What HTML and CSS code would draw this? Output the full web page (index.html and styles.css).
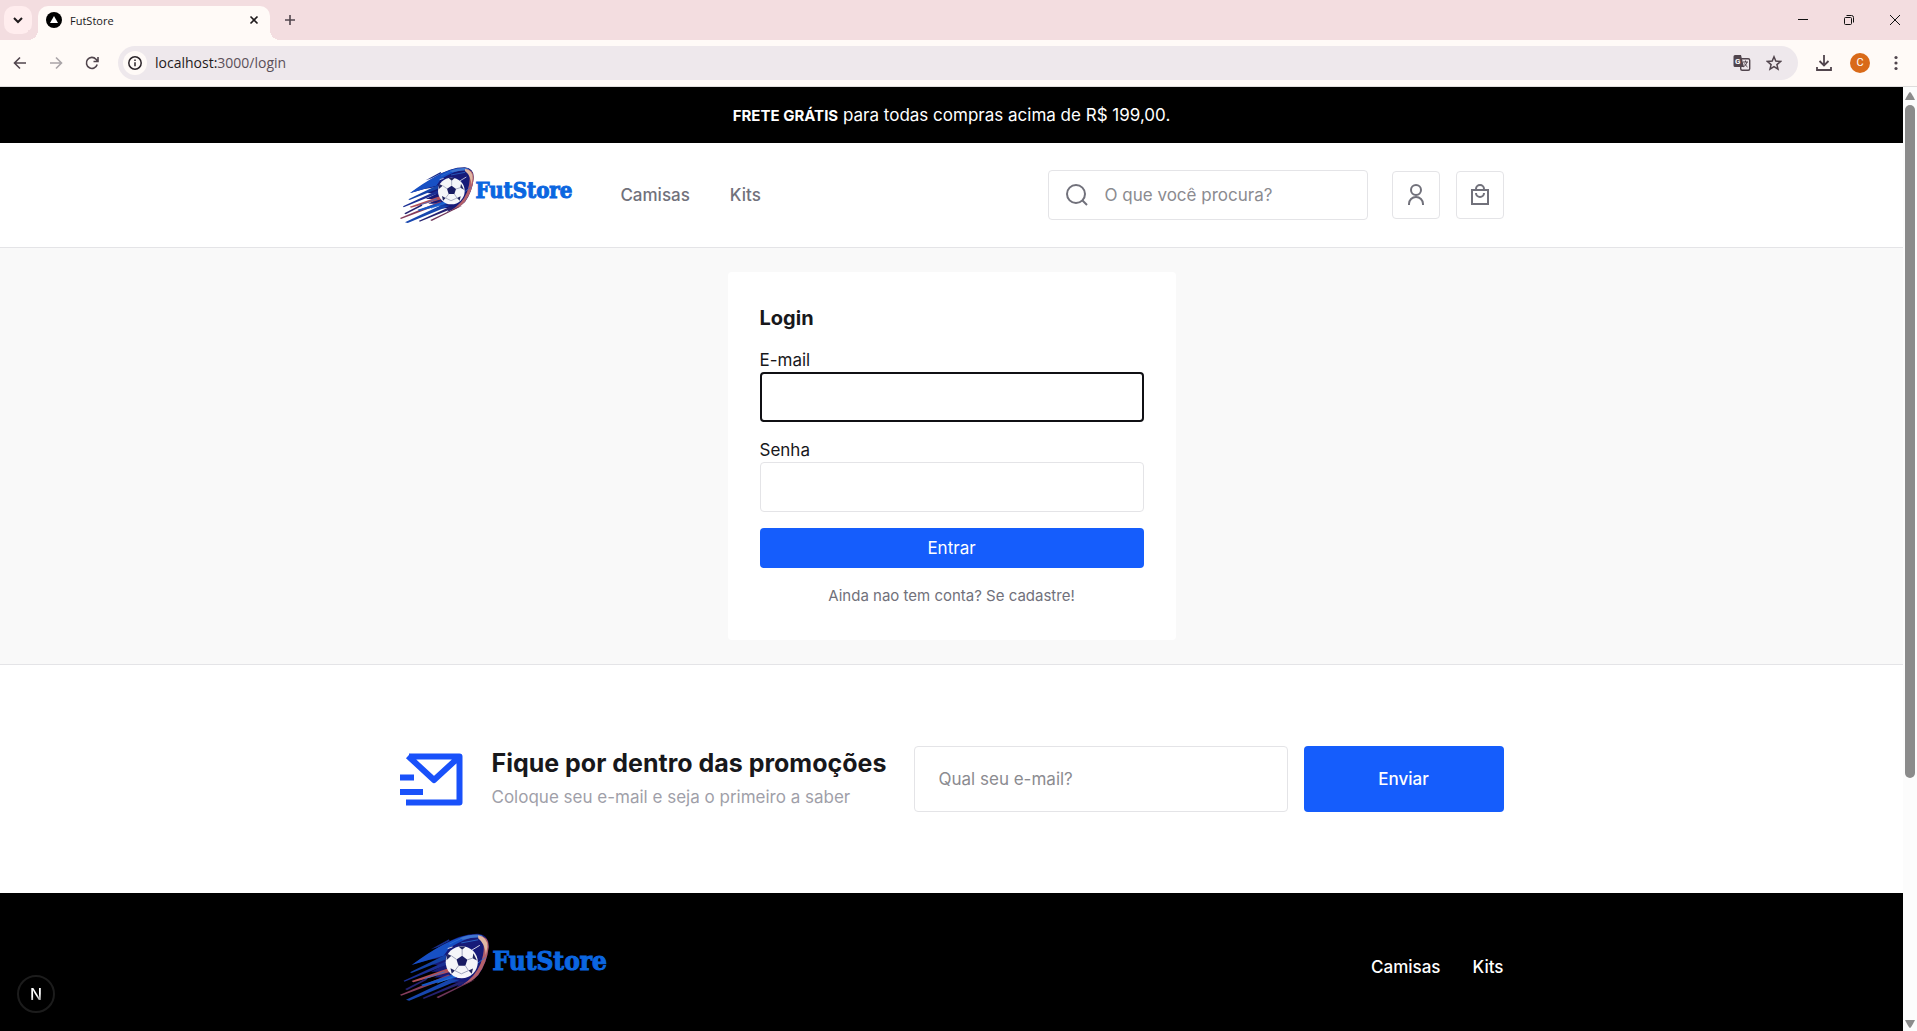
FILE: index.html
```html
<!DOCTYPE html>
<html lang="pt-BR">
<head>
<meta charset="utf-8">
<title>FutStore</title>
<link rel="stylesheet" href="styles.css">
</head>
<body>
<svg class="sprite" aria-hidden="true">
  <symbol id="comet" viewBox="27 50 222 168">
    <path d="M104 90 149 65 151 69 122 84Z" fill="#172c8c"/>
    <path d="M58 128 132 80Q180 50 222 51 250 54 248 84 244 125 222 155 200 176 168 184L178 172 140 176 152 160 112 160 138 146 104 146 136 130 108 128 138 110 100 116Z" fill="#161a78"/>
    <path d="M56 129Q140 66 198 54L228 54Q190 62 150 86L136 106 96 117Z" fill="#1750c4"/>
    <path d="M176 62Q206 50 230 54L240 64Q222 56 184 66Z" fill="#3f74cf"/>
    <path d="M224 56Q250 58 248 86 244 124 222 154 204 174 180 180 214 160 228 126 240 92 234 72Z" fill="#b4606a"/>
    <path d="M222 55Q246 60 245 84L241 104Q240 76 222 62Z" fill="#e0b7a4"/>
    <path d="M52 147 142 103 141 115 56 149Z" fill="#1443a8"/>
    <path d="M36 168 140 120 142 129 38 171Z" fill="#1b2f94"/>
    <path d="M56 169 146 138 154 146 60 172Z" fill="#b2505a"/>
    <path d="M27 203 148 153 156 159 30 206Z" fill="#873d5c"/>
    <path d="M40 189 92 162 94 166 44 192Z" fill="#252170"/>
    <path d="M80 178 164 151 168 161 84 182Z" fill="#1557c8"/>
    <path d="M42 216 152 164 176 166 50 218Z" fill="#1746ae"/>
    <path d="M84 211 176 170 190 172 86 214Z" fill="#252170"/>
    <path d="M118 209 200 170 214 166 122 212Z" fill="#6e3559"/>
    <path d="M120 174 176 152M90 163 138 146M150 77 182 62M208 134 240 110M180 74 222 66" stroke="#2e73d6" stroke-width="2" fill="none"/>
    <circle cx="181" cy="122" r="40" fill="#f5f6f9"/>
    <path d="M168 115 182 106 195 116 190 131 173 131Z" fill="#191c62"/>
    <path d="M173 83 182 91 191 83Z" fill="#22265f"/>
    <path d="M210 100 208 112 219 118Z" fill="#22265f"/>
    <path d="M206 151 198 143 209 138Z" fill="#22265f"/>
    <path d="M156 151 164 143 153 137Z" fill="#22265f"/>
    <path d="M145 101 155 106 143 117Z" fill="#22265f"/>
    <path d="M182 106V91M195 116 208 112M190 131 198 143M173 131 164 143M168 115 155 106M164 143 180 151 198 143" stroke="#8b91ae" stroke-width="2" fill="none"/>
    <path d="M206 92 226 80M146 88 158 84M170 160 192 156" stroke="#fff" stroke-width="2"/>
  </symbol>
</svg>

<div class="browser">
  <div class="tabstrip">
    <button class="tab-search" aria-label="Pesquisar guias"><svg width="16" height="16" viewBox="0 0 16 16" fill="none" stroke="#1f1a1c" stroke-width="2"><path d="m4 6 4 4 4-4"/></svg></button>
    <div class="tab">
      <svg width="16" height="16" viewBox="0 0 16 16"><circle cx="8" cy="8" r="8"/><path d="m8 4 4 7H4Z" fill="#fff"/></svg>
      <span class="tab__title">FutStore</span>
      <button class="icon-button" aria-label="Fechar guia"><svg width="16" height="16" viewBox="0 0 16 16" stroke="#1f1a1c" stroke-width="1.600"><path d="m4.500 4.500 7 7M11.500 4.500l-7 7"/></svg></button>
    </div>
    <button class="icon-button tab-new" aria-label="Nova guia"><svg width="16" height="16" viewBox="0 0 16 16" stroke="#51454d" stroke-width="1.600"><path d="M8 3v10M3 8h10"/></svg></button>
    <div class="window-controls">
      <button class="icon-button" aria-label="Minimizar"><svg width="12" height="12" viewBox="0 0 12 12" stroke="#111"><path d="M1 5.500h10"/></svg></button>
      <button class="icon-button" aria-label="Restaurar"><svg width="12" height="12" viewBox="0 0 12 12" stroke="#111" fill="none"><rect x="1.500" y="3.500" width="7" height="7" rx="1"/><path d="M3.500 1.500h5a2 2 0 0 1 2 2v5"/></svg></button>
      <button class="icon-button" aria-label="Fechar"><svg width="12" height="12" viewBox="0 0 12 12" stroke="#111"><path d="m1 1 10 10M11 1 1 11"/></svg></button>
    </div>
  </div>

  <div class="toolbar">
    <button class="icon-button" aria-label="Voltar"><svg width="16" height="16" viewBox="0 0 16 16" fill="none" stroke="#51454d" stroke-width="1.600"><path d="M14 8H3M8 2.500 2.500 8 8 13.500"/></svg></button>
    <button class="icon-button" aria-label="Avançar"><svg width="16" height="16" viewBox="0 0 16 16" fill="none" stroke="#aaa4a8" stroke-width="1.600"><path d="M2 8h11M8 2.500 13.500 8 8 13.500"/></svg></button>
    <button class="icon-button" aria-label="Recarregar"><svg width="16" height="16" viewBox="0 0 16 16" fill="none" stroke="#51454d" stroke-width="1.600"><path d="M13.200 9.500A5.500 5.500 0 1 1 12 4.200L13.500 6M14 2v4.500H9.500"/></svg></button>
    <div class="omnibox">
      <button class="site-info" aria-label="Informações do site"><svg width="16" height="16" viewBox="0 0 16 16" fill="none" stroke="#2b2429" stroke-width="1.500"><circle cx="8" cy="8" r="6.200"/><path d="M8 7.200v4M8 4.500V6"/></svg></button>
      <span class="url">localhost:<span class="url__path">3000/login</span></span>
      <button class="icon-button" aria-label="Traduzir"><svg width="18" height="18" viewBox="0 0 18 18"><rect x="7.700" y="4.700" width="9" height="11.600" rx="1.500" fill="none" stroke="#51454d" stroke-width="1.400"/><path d="M2 1h6l3 12H2a1.500 1.500 0 0 1-1.500-1.500v-9A1.500 1.500 0 0 1 2 1Z" fill="#51454d"/><text x="2" y="10" class="glyph-g">G</text><path d="M10 8h5M12.500 6.500V8M14 8q-1 4-4 5M11.500 9.500q1 2 3 3.500" stroke="#51454d" fill="none"/></svg></button>
      <button class="icon-button" aria-label="Favoritar"><svg width="16" height="16" viewBox="0 0 16 16" fill="none" stroke="#51454d" stroke-width="1.500"><path d="m8 1.800 1.800 4.300 4.700.4-3.600 3.100 1.100 4.600L8 11.700l-4 2.500 1.100-4.600L1.500 6.500l4.700-.4Z"/></svg></button>
    </div>
    <button class="icon-button" aria-label="Downloads"><svg width="18" height="18" viewBox="0 0 18 18" fill="none" stroke="#51454d" stroke-width="1.800"><path d="M9 1v10M4.500 7 9 11.500 13.500 7M2 13v3h14v-3"/></svg></button>
    <button class="avatar" aria-label="Perfil">C</button>
    <button class="icon-button" aria-label="Menu"><svg width="16" height="16" viewBox="0 0 16 16" fill="#51454d"><circle cx="8" cy="2.500" r="1.600"/><circle cx="8" cy="8" r="1.600"/><circle cx="8" cy="13.500" r="1.600"/></svg></button>
  </div>

  <div class="viewport">
    <div class="page">
      <p class="promo"><strong>FRETE GRÁTIS</strong> para todas compras acima de R$ 199,00.</p>

      <header class="header">
        <div class="container header__inner">
          <a class="logo" href="#"><svg class="logo__mark" aria-hidden="true"><use href="#comet"/></svg><span>FutStore</span></a>
          <nav class="nav">
            <a href="#">Camisas</a>
            <a href="#">Kits</a>
          </nav>
          <label class="search">
            <svg width="24" height="24" viewBox="0 0 24 24" fill="none" stroke="#71717b" stroke-width="2"><circle cx="11" cy="11" r="9"/><path d="m17 17 5 5"/></svg>
            <input type="search" placeholder="O que você procura?" aria-label="Buscar">
          </label>
          <div class="actions">
            <a class="action" href="#" aria-label="Minha conta"><svg width="24" height="24" viewBox="0 0 24 24" fill="none" stroke="#71717b" stroke-width="2"><circle cx="12" cy="7" r="5"/><path d="M5 22v-1a7 7 0 0 1 14 0v1"/></svg></a>
            <a class="action" href="#" aria-label="Carrinho"><svg width="24" height="24" viewBox="0 0 24 24" fill="none" stroke="#71717b" stroke-width="2"><path d="M4 7h16v14H4ZM8 7V6a4 4 0 0 1 8 0v1M8 10a4 4 0 0 0 8 0"/></svg></a>
          </div>
        </div>
      </header>

      <main class="main">
        <form class="card">
          <h1 class="card__title">Login</h1>
          <div class="field">
            <label for="email">E-mail</label>
            <input class="input input--active" id="email" type="email">
          </div>
          <div class="field">
            <label for="password">Senha</label>
            <input class="input" id="password" type="password">
          </div>
          <button class="button" type="button">Entrar</button>
          <a class="card__link" href="#">Ainda nao tem conta? Se cadastre!</a>
        </form>
      </main>

      <section class="newsletter">
        <div class="container newsletter__inner">
          <div class="newsletter__intro">
            <svg width="64" height="64" viewBox="0 0 64 64" fill="none" stroke="#1951fa" stroke-width="6"><path d="M9 9.500h50.500v46H6M8 9l26 24L59 10M0 30.500h14M0 45h23" stroke-linejoin="round"/></svg>
            <div>
              <h2 class="newsletter__title">Fique por dentro das promoções</h2>
              <p class="newsletter__text">Coloque seu e-mail e seja o primeiro a saber</p>
            </div>
          </div>
          <form class="newsletter__form">
            <input class="input newsletter__input" type="email" placeholder="Qual seu e-mail?" aria-label="Seu e-mail">
            <button class="button newsletter__button" type="button">Enviar</button>
          </form>
        </div>
      </section>

      <footer class="footer">
        <div class="container footer__inner">
          <a class="logo logo--large" href="#"><svg class="logo__mark" aria-hidden="true"><use href="#comet"/></svg><span>FutStore</span></a>
          <nav class="footer__nav">
            <a href="#">Camisas</a>
            <a href="#">Kits</a>
          </nav>
        </div>
      </footer>
      <button class="dev-badge" aria-label="Ferramentas de desenvolvimento"><span>N</span></button>
    </div>
    <div class="scrollbar" aria-hidden="true">
      <svg width="10" height="8" viewBox="0 0 10 8" fill="#8b8b8b"><path d="M5 0q1 0 5 8H0Q4 0 5 0Z"/></svg>
      <div class="scrollbar__track"><div class="scrollbar__thumb"></div></div>
      <svg width="10" height="8" viewBox="0 0 10 8" fill="#8b8b8b"><path d="M0 0h10Q6 8 5 8T0 0Z"/></svg>
    </div>
  </div>
</div>
</body>
</html>
```
FILE: styles.css
```css
* { box-sizing: border-box; }

body {
  margin: 0;
  font: 17px/24px Inter, sans-serif;
  color: #18181b;
}

h1, h2, p { margin: 0; }
a { color: inherit; text-decoration: none; }
button, input { font: inherit; color: inherit; }
button { padding: 0; border: 0; background: none; }
svg { display: block; flex: none; }
.sprite { position: absolute; width: 0; height: 0; }

/* Browser window */
.browser {
  display: flex;
  flex-direction: column;
  height: 100vh;
  overflow: hidden;
}

.icon-button {
  display: grid;
  place-items: center;
  flex: none;
  width: 20px;
  height: 20px;
}

.tabstrip {
  display: flex;
  flex: none;
  align-items: center;
  height: 40px;
  padding-left: 4px;
  background: #f3dde0;
}

.tab-search {
  display: grid;
  place-items: center;
  width: 28px;
  height: 28px;
  border-radius: 10px;
  background: #ffedee;
}

.tab {
  position: relative;
  display: flex;
  align-items: center;
  align-self: flex-end;
  gap: 8px;
  width: 232px;
  height: 34px;
  margin-left: 6px;
  padding: 0 6px 6px 8px;
  border-radius: 10px 10px 0 0;
  background: #fffaf7;
}

.tab::before,
.tab::after {
  content: "";
  position: absolute;
  bottom: 0;
  width: 10px;
  height: 10px;
}

.tab::before { right: 100%; background: radial-gradient(circle at 0 0, #f3dde0 10px, #fffaf7 10px); }
.tab::after { left: 100%; background: radial-gradient(circle at 100% 0, #f3dde0 10px, #fffaf7 10px); }
.tab__title { flex: 1; padding-top: 1px; font: 11px/16px "Open Sans", sans-serif; }
.tab-new { margin-left: 10px; }
.window-controls { display: flex; gap: 26px; margin-left: auto; padding-right: 12px; }

.toolbar {
  display: flex;
  flex: none;
  align-items: center;
  gap: 16px;
  height: 47px;
  padding: 0 11px 1px 10px;
  border-bottom: 1px solid #dedcdc;
  background: #fffaf7;
}

.omnibox {
  display: flex;
  flex: 1;
  align-items: center;
  gap: 12px;
  height: 34px;
  padding: 0 14px 0 5px;
  border-radius: 17px;
  background: #eee8ec;
}

.site-info {
  display: grid;
  place-items: center;
  width: 24px;
  height: 24px;
  border-radius: 50%;
  background: #fffaf7;
}

.url { flex: 1; margin-left: -4px; font: 14px/20px "Open Sans", sans-serif; color: #1f1a1c; }
.url__path { color: #5b5059; }
.glyph-g { font: bold 8px Roboto, sans-serif; fill: #fff; }

.avatar {
  width: 20px;
  height: 20px;
  border-radius: 50%;
  background: #d96a19;
  color: #fff;
  font: 11px/20px Roboto, sans-serif;
}

.viewport { display: flex; flex: 1; min-height: 0; }

.scrollbar {
  display: flex;
  flex-direction: column;
  align-items: center;
  gap: 5px;
  width: 14px;
  padding: 5px 0 3px;
  background: #fcfcfc;
}

.scrollbar__track { flex: 1; }
.scrollbar__thumb { width: 10px; height: 74%; border-radius: 5px; background: #8b8b8b; }

/* Store page */
.page {
  position: relative;
  display: flex;
  flex: 1;
  flex-direction: column;
  overflow: hidden;
  background: #fff;
}

.container { width: 100%; max-width: 1152px; margin: 0 auto; padding: 0 24px; }

.promo {
  padding: 16px;
  background: #000;
  color: #fff;
  text-align: center;
}

.promo strong { font-size: 15px; line-height: 16px; }

.header { padding: 24px 0; border-bottom: 1px solid #e4e4e7; }
.header__inner { display: flex; align-items: center; }

.logo {
  display: flex;
  gap: 2px;
  color: #0b66e0;
  font: bold 22px/46px "DejaVu Serif Condensed", "DejaVu Serif", serif;
  -webkit-text-stroke: 1px #0b66e0;
}

.logo__mark { width: 74px; height: 56px; }
.logo--large { gap: 4px; font-size: 26px; line-height: 56px; }
.logo--large .logo__mark { width: 89px; height: 68px; }

.nav {
  display: flex;
  gap: 40px;
  margin-left: 48px;
  color: #71717b;
  font-weight: 500;
}

.search {
  display: flex;
  align-items: center;
  gap: 16px;
  width: 320px;
  height: 50px;
  margin-left: auto;
  padding: 0 16px;
  border: 1px solid #e4e4e7;
  border-radius: 4px;
}

.search input {
  flex: 1;
  min-width: 0;
  padding: 0;
  border: 0;
  outline: 0;
  background: none;
}

::placeholder { color: #8b8b90; opacity: 1; }
.actions { display: flex; gap: 16px; margin-left: 24px; }

.action {
  display: grid;
  place-items: center;
  width: 48px;
  height: 48px;
  border: 1px solid #e4e4e7;
  border-radius: 4px;
}

.main { padding: 24px; background: #f9f9f9; }

.card {
  display: flex;
  flex-direction: column;
  gap: 16px;
  max-width: 448px;
  margin: 0 auto;
  padding: 32px;
  border-radius: 4px;
  background: #fff;
}

.card__title { font-size: 20px; line-height: 28px; font-weight: 700; }
.card__link { color: #71717b; font-size: 15px; text-align: center; }
.field { display: flex; flex-direction: column; }

.input {
  height: 50px;
  padding: 0 16px;
  border: 1px solid #e4e4e7;
  border-radius: 4px;
  background: #fff;
}

.input--active { border: 2px solid #101014; }

.button {
  height: 40px;
  border-radius: 4px;
  background: #155dfc;
  color: #fff;
}

.newsletter { padding: 80px 0; border-top: 1px solid #e4e4e7; }

.newsletter__inner {
  display: grid;
  grid-template-columns: 490px 1fr;
  align-items: center;
  gap: 24px;
  min-height: 68px;
}

.newsletter__intro { display: flex; align-items: center; gap: 28px; white-space: nowrap; }
.newsletter__title { font-size: 25px; line-height: 36px; font-weight: 700; }
.newsletter__text { padding: 4px 0; color: #9f9fa9; }
.newsletter__form { display: flex; gap: 16px; }
.newsletter__input { flex: 1; min-width: 0; height: 66px; padding: 0 24px; }
.newsletter__button { width: 200px; height: 66px; font-weight: 500; }

.footer { flex: 1; padding: 40px 0; background: #000; color: #fff; }
.footer__inner { display: flex; align-items: center; justify-content: space-between; }
.footer__nav { display: flex; gap: 32px; font-weight: 500; }

.dev-badge {
  position: absolute;
  bottom: 18px;
  left: 17px;
  width: 38px;
  height: 38px;
  border: 2px solid #1c1c1c;
  border-radius: 50%;
  background: #000;
  font: 500 16px/34px Inter, sans-serif;
}

.dev-badge span {
  background: linear-gradient(160deg, #fff 55%, #555);
  background-clip: text;
  color: transparent;
}
```
